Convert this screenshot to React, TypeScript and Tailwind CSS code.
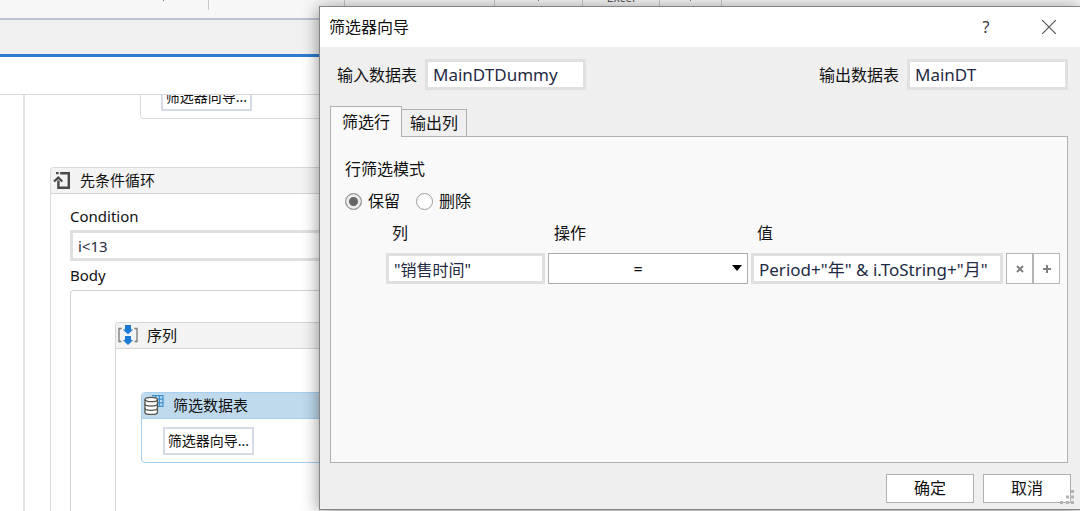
import { useState } from 'react'
import type { ReactNode } from 'react'

const OPERATORS = ['=', '<>', '<', '>', '<=', '>=']

const fieldClass =
  'block w-full min-w-0 border-3 border-[#e0e0e0] bg-white px-[5px] leading-5 text-[#1f2a44] outline-none'

function LoopIcon() {
  return (
    <svg viewBox="0 0 18 18" className="h-[18px] w-[18px]" fill="#4a4a4a" aria-hidden="true">
      <rect x="3" y="1" width="2.6" height="2.2" />
      <path d="M7.2 1H17v17H4.2V9.600h2.400v5.900h8V3.400H7.200z" />
      <path d="M5.300 5 10 9.800 8.500 11.200 5.400 8.200 1.600 11.200.3 9.800z" />
    </svg>
  )
}

function SequenceIcon() {
  return (
    <svg viewBox="0 0 20 20" className="h-5 w-5" aria-hidden="true">
      <path d="M3.500 3.500H1v13h2.500M16.500 3.500H19v13h-2.500" fill="none" stroke="#777" strokeWidth="1.3" />
      <path d="M7 0h6v4.500h2.200L10 9.200 4.800 4.500H7zM7 11h6v4h2.200L10 20l-5.200-5H7z" fill="#1a78d6" />
    </svg>
  )
}

function FilterTableIcon() {
  return (
    <svg viewBox="0 0 20 20" className="h-5 w-5" aria-hidden="true">
      <path d="M8 .7h11v10.600h-5M8 4.200h11M8 7.800h11M11.600.7v7M15.400.7v10.600" fill="none" stroke="#3a8fd0" strokeWidth="1.2" />
      <path d="M1 4.500v13c0 1 2.700 2 6.200 2s6.200-1 6.200-2v-13" fill="#fff" stroke="#55554d" strokeWidth="1.3" />
      <ellipse cx="7.2" cy="4.5" rx="6.2" ry="2.2" fill="#fff" stroke="#55554d" strokeWidth="1.3" />
      <path d="M1 9c0 1.100 2.700 2.100 6.200 2.100s6.200-1 6.200-2.100M1 13.300c0 1.100 2.700 2.100 6.200 2.100s6.200-1 6.200-2.100" fill="none" stroke="#55554d" strokeWidth="1.3" />
    </svg>
  )
}

function WizardButton() {
  return (
    <button className="block h-7 w-[91px] border-2 border-[#d5dbe6] bg-white text-[14px] leading-6 whitespace-nowrap">
      筛选器向导...
    </button>
  )
}

function ActivityHeader({ icon, title, active = false }: { icon: ReactNode; title: string; active?: boolean }) {
  return (
    <div
      className={[
        'flex h-[26px] items-center gap-[9px] rounded-t border-b pb-[2px] pl-[2px] text-[15px] leading-6',
        active ? 'border-[#a4cfee] bg-[#bfdaed]' : 'border-[#d6d6d6] bg-[#f3f3f3]',
      ].join(' ')}
    >
      {icon}
      <span>{title}</span>
    </div>
  )
}

function Ribbon() {
  return (
    <div className="h-[18px] bg-[#f7f7f7] text-[12px] leading-4 text-[#555]">
      <div className="flex h-[10px] items-end overflow-hidden">
        <div className="flex h-full w-[209px] items-start justify-end border-r border-[#c8c8c8] pr-11">
          <span className="h-px w-px bg-[#777]" />
        </div>
        <div className="h-full w-[136px] border-r border-[#c8c8c8]" />
        <div className="flex h-full w-[150px] border-r border-[#c8c8c8]" />
        <div className="flex h-full w-[88px] items-start justify-center border-r border-[#c8c8c8]">
          <span className="h-px w-px bg-[#777]" />
        </div>
        <div className="flex h-full w-[77px] items-end justify-center border-r border-[#c8c8c8] pb-1">Excel</div>
        <div className="flex h-full w-[62px] items-start justify-center border-r border-[#c8c8c8]">
          <span className="h-px w-px bg-[#777]" />
        </div>
      </div>
    </div>
  )
}

function Designer() {
  return (
    <main className="flex min-h-0 flex-1 overflow-hidden border-t border-[#d9d9d9]">
      <div className="w-[25px] shrink-0 border-r-2 border-[#e2e2e2]" />
      <div className="min-w-0 flex-1 pl-[25px]">
        <div className="ml-[90px] flex h-6 flex-col justify-end rounded-bl border-b border-l border-[#dcdcdc] pb-[7px] pl-5">
          <WizardButton />
        </div>

        <section className="mt-12 h-[600px] rounded-tl border-t border-l border-[#d9d9d9]">
          <ActivityHeader icon={<LoopIcon />} title="先条件循环" />
          <div className="pl-[19px] text-[15px] leading-5">
            <label htmlFor="condition" className="mt-3 block">
              Condition
            </label>
            <input id="condition" defaultValue="i<13" className={`${fieldClass} mt-1 h-[31px]`} />
            <div className="mt-1">Body</div>
            <div className="mt-[5px] h-[400px] rounded-tl border-t border-l border-[#d3d3d3] pt-[31px] pl-11">
              <section className="h-[300px] rounded-tl border-t border-l border-[#d6d6d6]">
                <ActivityHeader icon={<SequenceIcon />} title="序列" />
                <section className="mt-[43px] ml-[25px] rounded border border-[#a4cfee]">
                  <ActivityHeader icon={<FilterTableIcon />} title="筛选数据表" active />
                  <div className="pt-2 pb-[7px] pl-[21px]">
                    <WizardButton />
                  </div>
                </section>
              </section>
            </div>
          </div>
        </section>
      </div>
    </main>
  )
}

function FilterWizard() {
  const [mode, setMode] = useState('keep')

  return (
    <div
      role="dialog"
      aria-labelledby="wizard-title"
      className="absolute top-[6px] right-0 bottom-[1px] left-[319px] flex flex-col border-t border-b border-l border-[#858585] bg-[#efefef] text-[16px] leading-6 shadow-[0_2px_16px_rgba(0,0,0,0.45)]"
    >
      <header className="flex h-10 shrink-0 items-center justify-between bg-white pr-6 pl-[9px]">
        <h1 id="wizard-title">筛选器向导</h1>
        <div className="flex items-center gap-12">
          <button aria-label="帮助" className="w-4 text-[#333]">?</button>
          <button aria-label="关闭">
            <svg viewBox="0 0 14 14" className="h-[14px] w-[14px]" fill="none" stroke="#555" strokeWidth="1.2">
              <path d="M0 0l14 14M14 0L0 14" />
            </svg>
          </button>
        </div>
      </header>

      <div className="flex min-h-0 flex-1 flex-col pt-3 pr-3 pl-[10px]">
        <div className="flex items-center justify-between pl-[7px]">
          <div className="flex items-center gap-2">
            <label htmlFor="input-table">输入数据表</label>
            <div className="w-[161px]">
              <input id="input-table" defaultValue="MainDTDummy" className={`${fieldClass} h-[31px] text-[17px]`} />
            </div>
          </div>
          <div className="flex items-center gap-2">
            <label htmlFor="output-table">输出数据表</label>
            <div className="w-[161px]">
              <input id="output-table" defaultValue="MainDT" className={`${fieldClass} h-[31px] text-[17px]`} />
            </div>
          </div>
        </div>

        <div role="tablist" className="mt-4 flex items-end">
          <button
            role="tab"
            aria-selected="true"
            className="relative z-10 -mb-px h-[31px] border border-b-0 border-[#b0b0b0] bg-[#f9f9f9] px-[11px]"
          >
            筛选行
          </button>
          <button role="tab" aria-selected="false" className="h-[27px] border border-b-0 border-l-0 border-[#b0b0b0] px-2">
            输出列
          </button>
        </div>

        <div role="tabpanel" className="min-h-0 flex-1 border border-[#b0b0b0] bg-[#f9f9f9] pt-5 pr-[7px] pl-[14px]">
          <fieldset>
            <legend>行筛选模式</legend>
            <div className="mt-2 flex gap-4">
              {[
                { id: 'keep', label: '保留' },
                { id: 'remove', label: '删除' },
              ].map(m => (
                <label key={m.id} className="flex items-center gap-[6px]">
                  <input
                    type="radio"
                    name="mode"
                    checked={mode === m.id}
                    onChange={() => setMode(m.id)}
                    className="h-[17px] w-[17px] appearance-none rounded-full border border-[#999] bg-white checked:bg-[#666] checked:shadow-[inset_0_0_0_3px_#ececec]"
                  />
                  {m.label}
                </label>
              ))}
            </div>
          </fieldset>

          <div className="mt-2 grid grid-cols-[159fr_200fr_252fr_54px] gap-x-[3px] gap-y-2 pl-[41px]">
            <label htmlFor="column" className="pl-[6px]">列</label>
            <label htmlFor="operator" className="pl-[6px]">操作</label>
            <label htmlFor="value" className="pl-[6px]">值</label>
            <span />

            <input id="column" defaultValue={'"销售时间"'} className={`${fieldClass} h-[31px]`} />
            <div className="relative">
              <select
                id="operator"
                defaultValue="="
                className="h-[31px] w-full appearance-none border border-[#adadad] bg-white pr-5 [text-align-last:center]"
              >
                {OPERATORS.map(op => (
                  <option key={op}>{op}</option>
                ))}
              </select>
              <svg viewBox="0 0 10 6" className="pointer-events-none absolute top-3 right-[6px] h-[6px] w-[10px]">
                <path d="M0 0h10L5 6z" />
              </svg>
            </div>
            <input id="value" defaultValue={'Period+"年" & i.ToString+"月"'} className={`${fieldClass} h-[31px] text-[17px]`} />
            <div className="flex">
              <button aria-label="删除条件" className="flex flex-1 items-center justify-center border border-[#b5b5b5] bg-white">
                <svg viewBox="0 0 8 8" className="h-2 w-2" stroke="#808080" strokeWidth="2">
                  <path d="M1 1l6 6M7 1L1 7" />
                </svg>
              </button>
              <button aria-label="添加条件" className="flex flex-1 items-center justify-center border border-[#b5b5b5] bg-white">
                <svg viewBox="0 0 8 8" className="h-2 w-2" stroke="#808080" strokeWidth="2">
                  <path d="M4 0v8M0 4h8" />
                </svg>
              </button>
            </div>
          </div>
        </div>
      </div>

      <footer className="flex shrink-0 justify-end gap-[9px] pt-[11px] pr-[9px] pb-[6px]">
        <button className="h-[29px] w-[88px] border border-[#b0b0b0] bg-white pb-[2px]">确定</button>
        <button className="h-[29px] w-[88px] border border-[#b0b0b0] bg-white pb-[2px]">取消</button>
      </footer>

      <svg viewBox="0 0 14 14" className="absolute right-[6px] bottom-[5px] h-[14px] w-[14px]" fill="#b3b3b3" aria-hidden="true">
        <path d="M11 0h3v3h-3zM6 5.500h3v3H6zM11 5.500h3v3h-3zM0 11h3v3H0zM6 11h3v3H6zM11 11h3v3h-3z" />
      </svg>
    </div>
  )
}

export default function App() {
  return (
    <div className="relative flex h-screen flex-col overflow-hidden bg-white font-['Noto_Sans','Noto_Sans_CJK_SC',sans-serif] text-[#111]">
      <Ribbon />
      <div className="h-9 border-t-2 border-[#bcc3d3] bg-[#f0f0f0]" />
      <div className="h-10 border-t-3 border-[#2b7bd0] bg-white" />
      <Designer />
      <FilterWizard />
    </div>
  )
}
